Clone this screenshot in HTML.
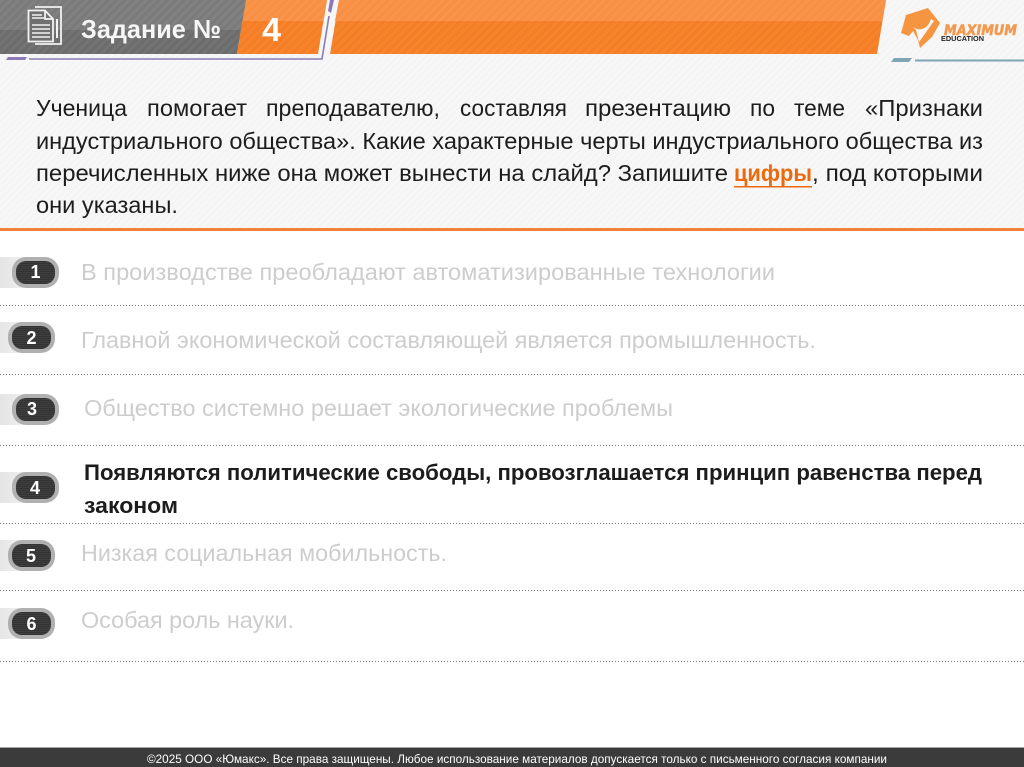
<!DOCTYPE html>
<html lang="ru"><head><meta charset="utf-8"><title>Задание № 4</title>
<style>html,body{margin:0;padding:0;background:#fff;width:1024px;height:767px;overflow:hidden}svg{display:block}text{font-family:"Liberation Sans","DejaVu Sans",sans-serif}</style></head>
<body>
<svg xmlns="http://www.w3.org/2000/svg" width="1024" height="767" viewBox="0 0 1024 767">
<defs>
<pattern id="s" width="6" height="6" patternUnits="userSpaceOnUse" patternTransform="rotate(45)"><rect width="3" height="6" fill="#fff" opacity=".05"/></pattern>
<pattern id="b" width="5" height="5" patternUnits="userSpaceOnUse" patternTransform="rotate(45)"><rect width="2" height="5" fill="#ececec" opacity=".25"/></pattern>
<pattern id="l" width="4" height="2" patternUnits="userSpaceOnUse"><rect width="4" height="1" fill="#000" opacity=".18"/></pattern>
<linearGradient id="st"><stop offset="0" stop-color="#e4e4e4"/><stop offset="1" stop-color="#f2f2f2"/></linearGradient>
<g id="pill"><rect x="-12" y="0" width="30" height="31" fill="url(#st)"/><rect x="0" y="0" width="47" height="31" rx="14" fill="#b0b0b0"/><rect x="4" y="4" width="39" height="23" rx="10" fill="#3e3e3e"/><rect x="4" y="4" width="39" height="23" rx="10" fill="url(#l)"/></g>
</defs>
<rect width="1024" height="767" fill="#fff"/>
<rect width="1024" height="228" fill="#f7f7f7"/>
<rect width="1024" height="228" fill="url(#b)"/>
<rect y="228" width="1024" height="3" fill="#ef8236"/>
<!-- header -->
<polygon points="0,0 246,0 237,54 0,54" fill="#6c6c6c"/>
<polygon points="0,0 246,0 241,30 0,30" fill="#7a7a7a"/>
<polygon points="0,0 246,0 237,54 0,54" fill="url(#s)"/>
<polygon points="246,0 327,0 318,54 237,54" fill="#f57d24"/>
<polygon points="246,0 327,0 323,21 243,21" fill="#f88f42"/>
<polygon points="246,0 327,0 318,54 237,54" fill="url(#s)"/>
<polygon points="339,0 886,0 877,54 330,54" fill="#f57d24"/>
<polygon points="339,0 886,0 882,21 335,21" fill="#f88f42"/>
<polygon points="339,0 886,0 877,54 330,54" fill="url(#s)"/>
<path d="M29 59H322L329 16" fill="none" stroke="#8b7ab5" stroke-width="1.600"/>
<polygon points="8,57 27,57 25,60 6,60" fill="#8b7ab5"/>
<polygon points="330,0 334,0 331,13 328,11" fill="#8b7ab5"/>
<polygon points="894,58 912,58 909,62 891,62" fill="#7ea5b4"/>
<rect x="915" y="59.500" width="109" height="2" fill="#7ea5b4"/>
<!-- doc icon -->
<g fill="none" stroke="#f2f2f2" stroke-width="1.800">
<path d="M35 7H61V44H35"/>
<path d="M28.500 10.500H45L53 19V41.500H28.500Z" fill="#707070"/>
<path d="M45 10.500V19H53"/>
<path d="M32 15H42M32 18H44M32 25H50M32 29H50M32 33H50M32 37H50" stroke-width="1.600"/>
<path d="M57 19V38" stroke-width="2"/>
</g>
<text x="81" y="38" font-size="26" font-weight="700" fill="#f6f6f6" textLength="140" lengthAdjust="spacingAndGlyphs">Задание №</text>
<text x="262" y="41" font-size="33" font-weight="700" fill="#fff" textLength="19" lengthAdjust="spacingAndGlyphs">4</text>
<!-- logo -->
<polygon points="906,15 928,8 940,23 932,37 920,48 918,40 913,31 909,36 901,33 903,26" fill="#f5953f"/>
<path d="M913 27L916 30L919 42L934 21L931 19C929 25 926 28 922 29C919 30 916 29 913 27Z" fill="#f7f7f7"/>
<text x="944" y="35" font-size="14" font-weight="700" font-style="italic" style="font-family:'DejaVu Sans',sans-serif" fill="#f29a50" textLength="73" lengthAdjust="spacingAndGlyphs" stroke="#f29a50" stroke-width=".6">MAXIMUM</text>
<text x="941" y="41" font-size="7" font-weight="700" fill="#222" textLength="43" lengthAdjust="spacingAndGlyphs">EDUCATION</text>
<!-- question -->
<g font-size="23" fill="#1d1d1d">
<text x="36" y="116" textLength="91" lengthAdjust="spacingAndGlyphs">Ученица</text>
<text x="147" y="116" textLength="100" lengthAdjust="spacingAndGlyphs">помогает</text>
<text x="266" y="116" textLength="174" lengthAdjust="spacingAndGlyphs">преподавателю,</text>
<text x="460" y="116" textLength="107" lengthAdjust="spacingAndGlyphs">составляя</text>
<text x="585" y="116" textLength="146" lengthAdjust="spacingAndGlyphs">презентацию</text>
<text x="750" y="116" textLength="25" lengthAdjust="spacingAndGlyphs">по</text>
<text x="794" y="116" textLength="51" lengthAdjust="spacingAndGlyphs">теме</text>
<text x="865" y="116" textLength="118" lengthAdjust="spacingAndGlyphs">«Признаки</text>
<text x="36" y="149" textLength="947" lengthAdjust="spacingAndGlyphs">индустриального общества». Какие характерные черты индустриального общества из</text>
<text x="36" y="181" textLength="692" lengthAdjust="spacingAndGlyphs">перечисленных ниже она может вынести на слайд? Запишите</text>
<text x="734" y="181" textLength="78" lengthAdjust="spacingAndGlyphs" font-weight="700" fill="#ec6a0c">цифры</text>
<rect x="734" y="186" width="78" height="1.500" fill="#ec6a0c"/>
<text x="812" y="181" textLength="171" lengthAdjust="spacingAndGlyphs">, под которыми</text>
<text x="36" y="213" textLength="142" lengthAdjust="spacingAndGlyphs">они указаны.</text>
</g>
<!-- dotted -->
<g stroke="#777" stroke-width="1" stroke-dasharray="1 2">
<path d="M0 305.500H1024M0 374.500H1024M0 445.500H1024M0 523.500H1024M0 590.500H1024M0 661.500H1024"/>
</g>
<!-- pills -->
<use href="#pill" x="12" y="257"/>
<use href="#pill" x="8" y="322"/>
<use href="#pill" x="12" y="394"/>
<use href="#pill" x="12" y="472"/>
<use href="#pill" x="8" y="540"/>
<use href="#pill" x="8" y="608"/>
<g font-size="18" font-weight="700" fill="#fff" text-anchor="middle">
<text x="35.500" y="278">1</text><text x="31.500" y="344">2</text><text x="32" y="415">3</text><text x="35" y="494">4</text><text x="31" y="562">5</text><text x="31.500" y="630">6</text>
</g>
<!-- items -->
<g font-size="23" fill="#cdcdcd">
<text x="81" y="280" textLength="694" lengthAdjust="spacingAndGlyphs">В производстве преобладают автоматизированные технологии</text>
<text x="81" y="348" textLength="735" lengthAdjust="spacingAndGlyphs">Главной экономической составляющей является промышленность.</text>
<text x="84" y="416" textLength="589" lengthAdjust="spacingAndGlyphs">Общество системно решает экологические проблемы</text>
<text x="81" y="561" textLength="366" lengthAdjust="spacingAndGlyphs">Низкая социальная мобильность.</text>
<text x="81" y="628" textLength="213" lengthAdjust="spacingAndGlyphs">Особая роль науки.</text>
</g>
<g font-size="22.500" font-weight="700" fill="#1c1c1c">
<text x="84" y="480" textLength="898" lengthAdjust="spacingAndGlyphs">Появляются политические свободы, провозглашается принцип равенства перед</text>
<text x="84" y="513" textLength="94" lengthAdjust="spacingAndGlyphs">законом</text>
</g>
<!-- footer -->
<rect y="747" width="1024" height="20" fill="#3b3b3b"/>
<rect y="747" width="1024" height="1" fill="#a5a5a5"/>
<text x="147" y="763" font-size="12" fill="#fff" textLength="740" lengthAdjust="spacingAndGlyphs">©2025 ООО «Юмакс». Все права защищены. Любое использование материалов допускается только с письменного согласия компании</text>
</svg>
</body></html>
